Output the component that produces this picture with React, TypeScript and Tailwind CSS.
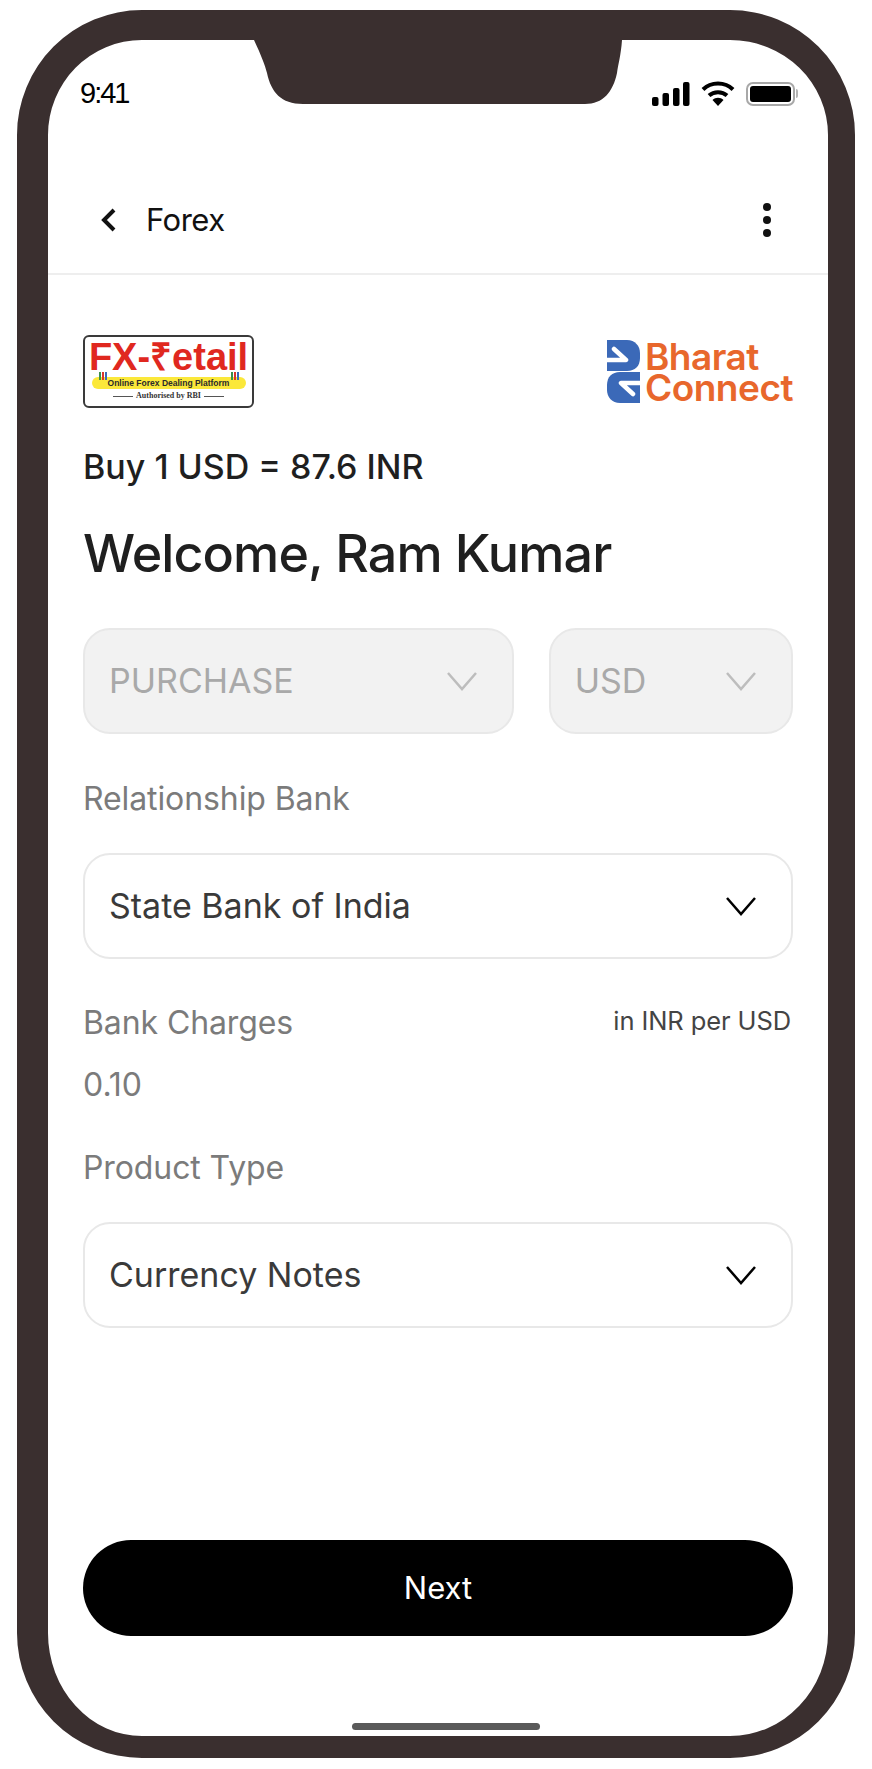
import type { ReactNode } from "react";

const inter = "font-['Inter',sans-serif]";

function Chevron({ color, width = 2.5 }: { color: string; width?: number }) {
  return (
    <svg width="32" height="20" viewBox="0 0 32 20" fill="none">
      <path d="M2 2 L16 18 L30 2" stroke={color} strokeWidth={width} />
    </svg>
  );
}

function Select({
  label,
  disabled,
  className,
}: {
  label: string;
  disabled?: boolean;
  className: string;
}) {
  return (
    <div
      className={`flex h-[106px] items-center justify-between rounded-[27px] border-2 border-[#e8e8e8] pl-[24px] ${className} ${
        disabled ? "bg-[#f2f2f2] text-[#a9a9a9]" : "bg-white text-[#3a3a3a]"
      }`}
    >
      <span className="text-[34px] leading-[40px]">{label}</span>
      <Chevron color={disabled ? "#bdbdbd" : "#000000"} />
    </div>
  );
}

function Label({ children }: { children: ReactNode }) {
  return <p className="text-[32px] leading-[40px] tracking-[-0.1px] text-[#7b7b7b]">{children}</p>;
}

function StatusIcons() {
  return (
    <div className="flex items-center">
      <svg width="38" height="24" viewBox="0 0 38 24" fill="#000">
        <rect x="0" y="15" width="6.5" height="9" rx="2" />
        <rect x="10.5" y="11" width="6.5" height="13" rx="2" />
        <rect x="21" y="6" width="6.5" height="18" rx="2" />
        <rect x="31" y="0" width="6.5" height="24" rx="2" />
      </svg>
      <svg className="ml-[11px]" width="34" height="25" viewBox="0 0 34 25" fill="none">
        <path d="M2 8.5 C10 0.5 24 0.5 32 8.5" stroke="#000" strokeWidth="4" />
        <path d="M8 14.5 C13 10 21 10 26 14.5" stroke="#000" strokeWidth="4" />
        <path d="M11.5 19 C14.5 16 19.5 16 22.5 19 L17 25 Z" fill="#000" />
      </svg>
      <div className="ml-[11px] flex items-center">
        <div className="flex h-[24px] w-[49px] items-center justify-center rounded-[7px] border-2 border-[#a8a8a8]">
          <div className="h-[16px] w-[41px] rounded-[3px] bg-black" />
        </div>
        <div className="ml-[1px] h-[9px] w-[2px] rounded-r-full bg-[#b5b5b5]" />
      </div>
    </div>
  );
}

function PillBars({ className }: { className: string }) {
  return (
    <div className={`absolute top-[-5px] flex gap-px ${className}`}>
      <div className="h-[8px] w-[2px] bg-[#3b8f4a]" />
      <div className="h-[8px] w-[2px] bg-[#d9342b]" />
      <div className="h-[8px] w-[2px] bg-[#3b69b8]" />
    </div>
  );
}

function FxLogo() {
  return (
    <div className="flex h-[73px] w-[171px] flex-col items-center rounded-[6px] border-2 border-[#3a3a3a] bg-white">
      <p className="mt-[2px] text-[38px] font-bold leading-[36px] whitespace-nowrap text-[#e0281f] font-['Liberation_Sans',sans-serif]">
        FX-₹etail
      </p>
      <div className="relative mt-[2px] flex h-[12px] w-[154px] items-center justify-center rounded-full bg-[#fbe83a]">
        <PillBars className="left-[7px]" />
        <span className="text-[8.5px] font-bold leading-none whitespace-nowrap text-[#2b2b2b] font-['Liberation_Sans',sans-serif]">
          Online Forex Dealing Platform
        </span>
        <PillBars className="right-[7px]" />
      </div>
      <div className="mt-[2px] flex items-center gap-[3px]">
        <div className="h-px w-[20px] bg-[#555]" />
        <span className="text-[8px] font-bold leading-[10px] whitespace-nowrap text-[#333] font-['Liberation_Serif',serif]">
          Authorised by RBI
        </span>
        <div className="h-px w-[20px] bg-[#555]" />
      </div>
    </div>
  );
}

function BharatMark() {
  return (
    <>
      <path d="M0 0 H20 C28 0 33 6 33 13 V18 C33 26 28 31 20 31 H0 Z" fill="#3b69b8" />
      <path
        d="M7 9 L19 20 H0"
        fill="none"
        stroke="#fff"
        strokeWidth="4.5"
        strokeLinecap="round"
        strokeLinejoin="round"
      />
    </>
  );
}

function BharatLogo() {
  return (
    <div className="flex items-center gap-[5px]">
      <svg width="33" height="63" viewBox="0 0 33 63">
        <BharatMark />
        <g transform="rotate(180 16.5 31.5)">
          <BharatMark />
        </g>
      </svg>
      <div className="text-[37px] font-semibold leading-[31px] tracking-[-0.5px] text-[#e8672c] font-['Inter',sans-serif]">
        <p>Bharat</p>
        <p>Connect</p>
      </div>
    </div>
  );
}

export default function App() {
  return (
    <div className={`h-[1769px] w-[872px] bg-white pl-[17px] pt-[10px] ${inter}`}>
      <div className="relative h-[1748px] w-[838px] rounded-[125px] border-b-[22px] border-l-[31px] border-r-[27px] border-t-[30px] border-[#3a2f2f] bg-white">
        {/* notch sits on top of the screen */}
        <svg className="absolute left-[205px] top-0" width="370" height="64" viewBox="0 0 370 64">
          <path
            d="M1 0 C8 15 12 25 14 33 C18 52 28 64 50 64 H332 C350 64 360 52 364 33 C365 25 368 15 369 0 Z"
            fill="#3a2f2f"
          />
        </svg>

        <div className="flex h-[84px] items-start justify-between pl-[32px] pr-[30px] pt-[41px]">
          <span className="text-[29px] leading-[24px] tracking-[-2px] text-black font-['Liberation_Sans',sans-serif]">
            9:41
          </span>
          <StatusIcons />
        </div>

        <div className="flex h-[151px] items-center justify-between border-b-2 border-[#eeeeee] pl-[53px] pr-[57px] pt-[43px]">
          <div className="flex items-center gap-[30px]">
            <svg width="15" height="24" viewBox="0 0 15 24" fill="none">
              <path d="M13 2 L3 12 L13 22" stroke="#111" strokeWidth="4" />
            </svg>
            <span className="text-[31px] leading-[40px] tracking-[-0.5px] text-[#111]">Forex</span>
          </div>
          <svg width="8" height="34" viewBox="0 0 8 34" fill="#111">
            <circle cx="4" cy="4" r="4" />
            <circle cx="4" cy="17" r="4" />
            <circle cx="4" cy="30" r="4" />
          </svg>
        </div>

        <div className="px-[35px]">
          <div className="mt-[60px] flex items-center justify-between">
            <FxLogo />
            <BharatLogo />
          </div>
          <p className="mt-[37px] text-[34px] font-medium leading-[44px] text-[#1f1f1f]">
            Buy 1 USD = 87.6 INR
          </p>
          <h1 className="mt-[32px] text-[52px] font-[450] leading-[66px] tracking-[-0.9px] text-[#1f1f1f]">
            Welcome, Ram Kumar
          </h1>
          <div className="mt-[41px] flex gap-[35px]">
            <Select label="PURCHASE" disabled className="w-[432px] pr-[34px]" />
            <Select label="USD" disabled className="w-[245px] pr-[34px]" />
          </div>
          <div className="mt-[45px]">
            <Label>Relationship Bank</Label>
          </div>
          <Select label="State Bank of India" className="mt-[34px] pr-[34px]" />
          <div className="mt-[44px] flex items-start justify-between">
            <Label>Bank Charges</Label>
            <span className="mr-[2px] mt-px text-[25.5px] leading-[34px] tracking-[-0.1px] text-[#444]">in INR per USD</span>
          </div>
          <p className="mt-[22px] text-[32px] leading-[40px] text-[#7b7b7b]">0.10</p>
          <div className="mt-[43px]">
            <Label>Product Type</Label>
          </div>
          <Select label="Currency Notes" className="mt-[34px] pr-[34px]" />
          <button className="mt-[212px] flex h-[96px] w-full items-center justify-center rounded-full bg-black text-[31px] text-white">
            Next
          </button>
        </div>

        {/* home indicator */}
        <div className="absolute bottom-[6px] left-[304px] h-[7px] w-[188px] rounded-full bg-[#5a5a5a]" />
      </div>
    </div>
  );
}
